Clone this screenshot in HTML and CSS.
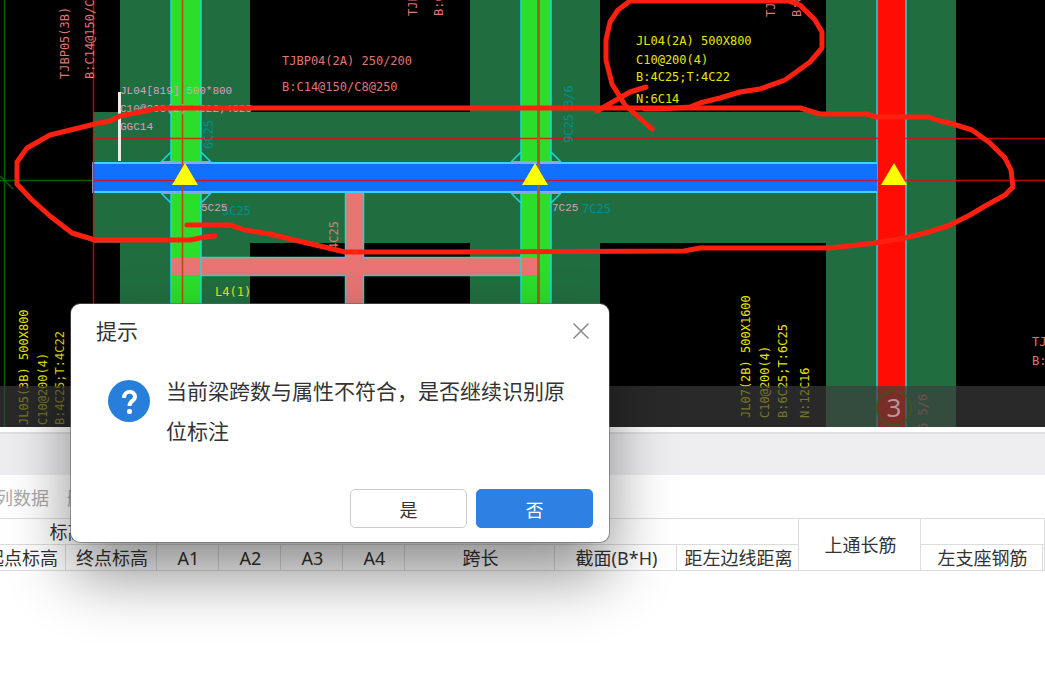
FILE: index.html
```html
<!DOCTYPE html>
<html lang="zh-CN">
<head>
<meta charset="UTF-8">
<meta name="viewport" content="width=device-width, initial-scale=1.0">
<title>梁原位标注</title>
<link rel="stylesheet" href="styles.css">
</head>
<body>
<div class="workspace">
    <svg class="drawing" viewBox="0 0 1045 427">
        <rect class="paper" width="1045" height="427"/>

        <!-- foundation strips -->
        <g class="strip">
            <rect x="120" y="0" width="130" height="427"/>
            <rect x="470" y="0" width="130" height="427"/>
            <rect x="826" y="0" width="130" height="427"/>
            <rect x="93" y="112" width="863" height="131"/>
        </g>

        <!-- axis lines on the left -->
        <path class="axis-green" d="M4.500 0V427M0 180.500H93M0 176L13 189"/>

        <!-- vertical beams -->
        <g class="beam-green">
            <rect x="171" y="0" width="30" height="427"/>
            <rect x="521" y="0" width="30" height="427"/>
        </g>
        <g class="beam-pink">
            <rect x="345" y="193" width="19" height="234"/>
            <rect x="171" y="258" width="367" height="17"/>
        </g>
        <path class="edge" d="M171 0V427M201 0V427M521 0V427M551 0V427"/>
        <path class="edge" d="M345.500 193V257.500H201M345.500 427V275.500H201M363.500 193V257.500H521M363.500 427V275.500H521"/>
        <rect class="beam-red" x="877" y="0" width="28" height="427"/>
        <path class="edge-teal" d="M877 0V427M906 0V427"/>
        <path class="edge" d="M171 152L161 162M201 152L211 162M161 193L171 203M211 193L201 203M521 152L511 162M551 152L561 162M511 193L521 203M561 193L551 203"/>

        <!-- selected beam -->
        <rect class="beam-blue" x="93" y="163" width="784" height="29"/>
        <path class="edge-blue" d="M93 163H877M93 192H877"/>
        <path class="edge-violet" d="M161 162H211M161 193H211M511 162H561M511 193H561M93 162V193"/>

        <path class="axis-red" d="M93.500 0V427M93 138.500H1045M93 180.500H1045"/>
        <path class="axis-brown" d="M182.500 0V427"/>
        <path class="axis-brown wide" d="M538.500 0V427"/>
        <rect class="beam-red" x="878" y="100" width="27" height="100"/>
        <path class="label-line" d="M119.500 92V161"/>

        <g class="cad pink">
            <text x="282" y="65">TJBP04(2A) 250/200</text>
            <text x="282" y="91">B:C14@150/C8@250</text>
            <text transform="translate(69 79) rotate(-90)">TJBP05(3B)</text>
            <text transform="translate(94 79) rotate(-90)">B:C14@150/C8@250</text>
            <text transform="translate(417 16) rotate(-90)">TJBP</text>
            <text transform="translate(443 16) rotate(-90)">B:C14</text>
            <text transform="translate(775 17) rotate(-90)">TJBP</text>
            <text transform="translate(801 17) rotate(-90)">B:C14</text>
            <text transform="translate(338 250) rotate(-90)">4C25</text>
            <text x="1032" y="346">TJBP</text>
            <text x="1032" y="365">B:C14</text>
            <text transform="translate(927 430) rotate(-90)">6 5/6</text>
        </g>
        <g class="cad yellow">
            <text x="636" y="45">JL04(2A) 500X800</text>
            <text x="636" y="64">C10@200(4)</text>
            <text x="636" y="81">B:4C25;T:4C22</text>
            <text x="636" y="103">N:6C14</text>
            <text x="215" y="296">L4(1)</text>
            <text transform="translate(28 425) rotate(-90)">JL05(3B) 500X800</text>
            <text transform="translate(47 425) rotate(-90)">C10@200(4)</text>
            <text transform="translate(64 425) rotate(-90)">B:4C25;T:4C22</text>
            <text transform="translate(750 418) rotate(-90)">JL07(2B) 500X1600</text>
            <text transform="translate(769 418) rotate(-90)">C10@200(4)</text>
            <text transform="translate(787 418) rotate(-90)">B:6C25;T:6C25</text>
            <text transform="translate(809 418) rotate(-90)">N:12C16</text>
        </g>
        <g class="cad teal">
            <text transform="translate(213 149) rotate(-90)">6C25</text>
            <text transform="translate(573 143) rotate(-90)">9C25 3/6</text>
            <text x="222" y="215">5C25</text>
            <text x="582" y="213">7C25</text>
        </g>
        <g class="note">
            <text x="120" y="94">JL04[819] 500*800</text>
            <text x="120" y="112">C10@200(2) 4C22;4C25</text>
            <text x="120" y="130">GGC14</text>
            <text x="201" y="211">5C25</text>
            <text x="552" y="211">7C25</text>
        </g>

        <path class="support" d="M185 163L198 185H172ZM535 163L548 185H522ZM894 163L907 185H881Z"/>

        <!-- status strip over the drawing -->
        <rect class="status" x="0" y="386" width="1045" height="41"/>
        <circle class="axis-bubble" cx="894" cy="408" r="17"/>
        <text class="axis-number" x="894" y="417">3</text>

        <!-- red pen marks -->
        <path class="pen" d="M215 236L205 237L190 240H95L72 233L50 216L32 200L17 184V162L27 148L50 135L95 124L110 121L120 116L140 112L160 108H800L820 114H866L876 117H928L940 121L953 124L972 130L990 143L1005 158L1011 170L1013 187L1005 195L985 206L970 215L948 226L925 233L905 238L875 243L830 248H700L684 251L452 252H345L320 246L290 239L270 234L245 230L230 225H187"/>
        <path class="pen" d="M652 129L625 105L612 84L606 60V40L610 22L618 10L630 1H788L800 5L815 20L822 32V48L810 62L785 80L760 89L740 92L720 98L700 103L690 107L660 109H645M646 87L630 92L597 111"/>
    </svg>

    <div class="tab-strip"></div>
    <div class="toolbar">
        <button class="tool" disabled>列数据</button>
        <button class="tool" disabled>删除列</button>
    </div>

    <div class="grid-wrap">
        <table class="grid">
            <colgroup>
                <col class="c-start"><col class="c-end">
                <col class="c-a"><col class="c-a"><col class="c-a"><col class="c-a">
                <col class="c-span">
                <col class="c-std"><col class="c-std"><col class="c-std"><col class="c-std">
                <col>
            </colgroup>
            <thead>
                <tr>
                    <th colspan="2">标高</th>
                    <th colspan="7"></th>
                    <th rowspan="2">上通长筋</th>
                    <th colspan="2"></th>
                </tr>
                <tr>
                    <th>起点标高</th>
                    <th>终点标高</th>
                    <th>A1</th>
                    <th>A2</th>
                    <th>A3</th>
                    <th>A4</th>
                    <th>跨长</th>
                    <th>截面(B*H)</th>
                    <th>距左边线距离</th>
                    <th>左支座钢筋</th>
                    <th></th>
                </tr>
            </thead>
        </table>
    </div>
</div>

<div class="dialog" role="dialog" aria-labelledby="dialog-title">
    <div class="dialog-head">
        <h2 id="dialog-title">提示</h2>
        <button class="close" aria-label="关闭">
            <svg width="16" height="16" viewBox="0 0 16 16"><path d="M0.500 0.500L15.500 15.500M15.500 0.500L0.500 15.500"/></svg>
        </button>
    </div>
    <div class="dialog-body">
        <svg class="question" width="42" height="42" viewBox="0 0 42 42">
            <circle cx="21" cy="21" r="21"/>
            <path d="M16 18C16 10 27 10 27 17C27 21 21.500 20.500 21.500 26"/>
            <rect x="19" y="29" width="5" height="5" rx="2"/>
        </svg>
        <p>当前梁跨数与属性不符合，是否继续识别原位标注</p>
    </div>
    <div class="dialog-foot">
        <button class="btn">是</button>
        <button class="btn primary">否</button>
    </div>
</div>
</body>
</html>
```

FILE: styles.css
```css
* {
    box-sizing: border-box;
}
body {
    margin: 0;
    background-color: #fff;
    color: #333;
    font-family: "Noto Sans", "Noto Sans CJK SC", sans-serif;
    font-size: 18px;
    overflow-x: hidden;
}
button {
    font: inherit;
    padding: 0;
}

/* Drawing area */
.drawing {
    display: block;
    width: 100%;
    height: auto;
}
.strip {
    fill: #206e40;
}
.beam-green {
    fill: #2cdd2c;
}
.beam-pink {
    fill: #e87474;
}
.beam-red {
    fill: #ff0d04;
}
.beam-blue {
    fill: #1070ff;
}
.edge {
    fill: none;
    stroke: #14dcdc;
    stroke-width: 1.5;
}
.edge-teal {
    stroke: #30b4ac;
    stroke-width: 2;
}
.edge-blue {
    stroke: #3cd4ff;
    stroke-width: 2;
}
.edge-violet {
    stroke: #84a4f0;
    stroke-width: 2;
}
.axis-green {
    stroke: #006000;
    stroke-width: 1.5;
}
.axis-red {
    stroke: #e80808;
    stroke-opacity: 0.8;
    stroke-width: 1.5;
}
.axis-brown {
    stroke: #b84a10;
    stroke-width: 1.5;
}
.axis-brown.wide {
    stroke: #a0641a;
    stroke-width: 3;
}
.label-line {
    stroke: #eee;
    stroke-width: 3;
}
.cad {
    font-family: "DejaVu Sans Mono", monospace;
    font-size: 12px;
}
.pink {
    fill: #e47474;
}
.yellow {
    fill: #e6e600;
}
.teal {
    fill: #009090;
}
.note {
    fill: #dc9cc4;
    font-family: "Liberation Mono", monospace;
    font-size: 11px;
}
.support {
    fill: #ff0;
}
.status {
    fill: #3c3c3c;
    fill-opacity: 0.68;
}
.axis-bubble {
    fill: none;
    stroke: #44501e;
    stroke-width: 2;
}
.axis-number {
    fill: #b89494;
    font-size: 26px;
    text-anchor: middle;
}
.paper {
    fill: #000;
}
.pen {
    fill: none;
    stroke: #ff2010;
    stroke-width: 5;
    stroke-linecap: round;
    stroke-linejoin: round;
}

/* Property grid */
.tab-strip {
    height: 43px;
    margin-top: 5px;
    border-top: 2px solid #e0e0e0;
    background-color: #eeeef0;
}
.toolbar {
    display: flex;
    gap: 18px;
    height: 43px;
    margin-left: -5px;
}
.tool {
    border: none;
    background: none;
    color: #aaa;
}
.grid-wrap {
    overflow: hidden;
}
.grid {
    width: calc(100% + 24px);
    margin-left: -24px;
    table-layout: fixed;
    border-collapse: collapse;
}
.grid th {
    height: 26px;
    padding: 0 0 0 2px;
    border: 1px solid #dcdcdc;
    font-weight: normal;
    line-height: 24px;
    white-space: nowrap;
}
.c-start {
    width: 89px;
}
.c-end {
    width: 91px;
}
.c-a {
    width: 62px;
}
.c-span {
    width: 150px;
}
.c-std {
    width: 122px;
}

/* Message box */
.dialog {
    position: absolute;
    top: 304px;
    left: 71px;
    width: 538px;
    padding: 11px 16px 14px 25px;
    border-radius: 9px;
    background-color: #fff;
    box-shadow: 0 0 0 1px rgba(100, 100, 100, 0.6), 0 32px 64px rgba(0, 0, 0, 0.45);
    font-size: 21px;
}
.dialog-head {
    display: flex;
    justify-content: space-between;
    align-items: center;
}
.dialog-head h2 {
    margin: 0;
    font-size: 21px;
    font-weight: normal;
    line-height: 32px;
}
.close {
    width: 24px;
    height: 24px;
    border: none;
    background: none;
    line-height: 0;
}
.close path {
    stroke: #888;
    stroke-width: 1.5;
}
.dialog-body {
    display: flex;
    align-items: flex-start;
    gap: 16px;
    padding: 24px 24px 0 12px;
}
.dialog-body p {
    flex: 1;
    margin: 0;
    line-height: 40px;
}
.question {
    margin-top: 9px;
}
.question circle {
    fill: #277fdb;
}
.question path {
    fill: none;
    stroke: #fff;
    stroke-width: 4;
}
.question rect {
    fill: #fff;
}
.dialog-foot {
    display: flex;
    justify-content: flex-end;
    gap: 9px;
    padding-top: 38px;
}
.btn {
    width: 117px;
    height: 39px;
    border: 1px solid #ccc;
    border-radius: 5px;
    background-color: #fff;
    color: #333;
    font-size: 18px;
}
.btn.primary {
    border-color: #2d81e2;
    background-color: #2d81e2;
    color: #fff;
}
```
